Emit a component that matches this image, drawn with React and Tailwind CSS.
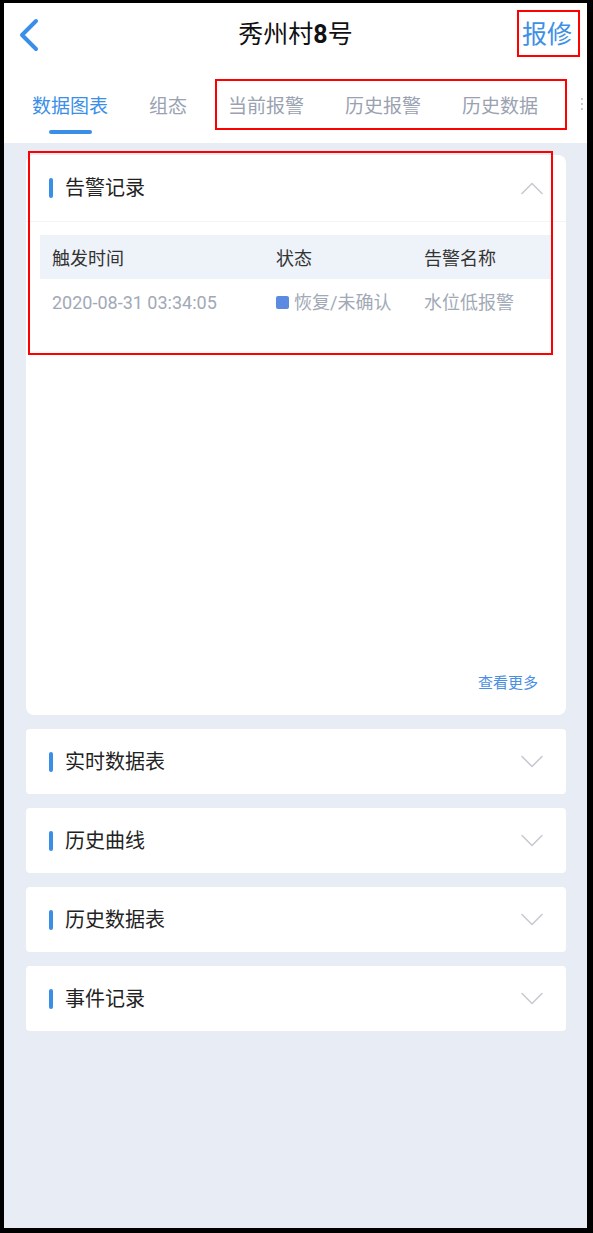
import React from 'react';

const tabs = ['数据图表', '组态', '当前报警', '历史报警', '历史数据'];
const sections = ['实时数据表', '历史曲线', '历史数据表', '事件记录'];

const Chevron = ({ up }) => (
  <svg width="24" height="14" viewBox="0 0 24 14" fill="none" className="shrink-0">
    <path
      d={up ? 'M2 12.5 L12 2.5 L22 12.5' : 'M2 1.5 L12 11.5 L22 1.5'}
      stroke="#c6cad2"
      strokeWidth="1.6"
      strokeLinecap="round"
      strokeLinejoin="round"
    />
  </svg>
);

const SectionTitle = ({ children }) => (
  <div className="flex items-center">
    <span className="w-[4px] h-[20px] rounded-full bg-[#3a8ee8]" />
    <span className="ml-[12px] text-[20px] leading-[26px] text-[#222]">{children}</span>
  </div>
);

export default function App() {
  return (
    <div
      className="w-[593px] h-[1233px] bg-black pt-[3px] pl-[4px] pr-[6px] pb-[5px]"
      style={{ fontFamily: 'Roboto, "Noto Sans CJK SC", sans-serif' }}
    >
      <div className="relative h-full bg-[#e8ecf4] overflow-hidden">
        {/* top bar */}
        <div className="h-[64px] bg-white grid grid-cols-[80px_1fr_80px] items-center">
          <div className="pl-[14px]">
            <svg width="22" height="34" viewBox="0 0 22 34" fill="none">
              <path d="M18 3 L4 17 L18 31" stroke="#3a8ee8" strokeWidth="4" strokeLinecap="round" strokeLinejoin="round" />
            </svg>
          </div>
          <div className="text-center text-[25px] leading-[32px] text-[#111]">
            秀州村<span className="font-bold">8</span>号
          </div>
          <div className="text-right pr-[15px] text-[25px] leading-[32px] text-[#3e8fe6]">报修</div>
        </div>

        {/* tabs */}
        <div className="h-[76px] bg-white flex pl-[28px] gap-[41px] overflow-hidden relative">
          {tabs.map((t, i) => (
            <div key={t} className="flex flex-col items-center pt-[27px] shrink-0">
              <span className={`text-[19px] leading-[26px] whitespace-nowrap ${i === 0 ? 'text-[#3a8ee8]' : 'text-[#9aa2b1]'}`}>{t}</span>
              {i === 0 && <span className="mt-[10px] w-[43px] h-[4px] rounded-full bg-[#3a8ee8]" />}
            </div>
          ))}
          <div className="absolute right-[4px] top-[31px] flex flex-col gap-[3px]">
            <span className="w-[2px] h-[2px] bg-[#c8ccd4]" />
            <span className="w-[2px] h-[2px] bg-[#c8ccd4]" />
            <span className="w-[2px] h-[2px] bg-[#c8ccd4]" />
          </div>
        </div>

        <div className="px-[22px] pr-[21px] pt-[12px] flex flex-col gap-[14px]">
          {/* alarm record card */}
          <div className="h-[560px] bg-white rounded-[8px] flex flex-col">
            <div className="h-[67px] flex items-center justify-between pl-[23px] pr-[22px] border-b border-[#f2f4f7]">
              <SectionTitle>告警记录</SectionTitle>
              <Chevron up />
            </div>
            <div className="px-[14px] pt-[13px]">
              <div className="h-[44px] bg-[#eef2f9] grid grid-cols-[224px_148px_1fr] items-center pl-[12px] pt-[2px] text-[18px] text-[#333]">
                <span>触发时间</span>
                <span>状态</span>
                <span>告警名称</span>
              </div>
              <div className="h-[44px] grid grid-cols-[224px_148px_1fr] items-center pl-[12px] pt-[2px] text-[18px] text-[#a2a9b6]">
                <span>2020-08-31 03:34:05</span>
                <span className="flex items-center">
                  <span className="w-[13px] h-[13px] rounded-[2px] bg-[#5a8be0] mr-[5px]" />
                  恢复/未确认
                </span>
                <span>水位低报警</span>
              </div>
            </div>
            <div className="mt-auto pb-[22px] pr-[28px] text-right text-[15px] leading-[20px] text-[#4a90e2]">查看更多</div>
          </div>

          {sections.map((s) => (
            <div key={s} className="h-[65px] bg-white rounded-[4px] flex items-center justify-between pl-[23px] pr-[22px]">
              <SectionTitle>{s}</SectionTitle>
              <Chevron />
            </div>
          ))}
        </div>

        {/* annotation boxes */}
        <div className="absolute left-[513px] top-[7px] w-[63px] h-[47px] border-2 border-[#ff0000]" />
        <div className="absolute left-[211px] top-[76px] w-[352px] h-[51px] border-2 border-[#ff0000]" />
        <div className="absolute left-[24px] top-[148px] w-[525px] h-[204px] border-2 border-[#ff0000]" />
      </div>
    </div>
  );
}
